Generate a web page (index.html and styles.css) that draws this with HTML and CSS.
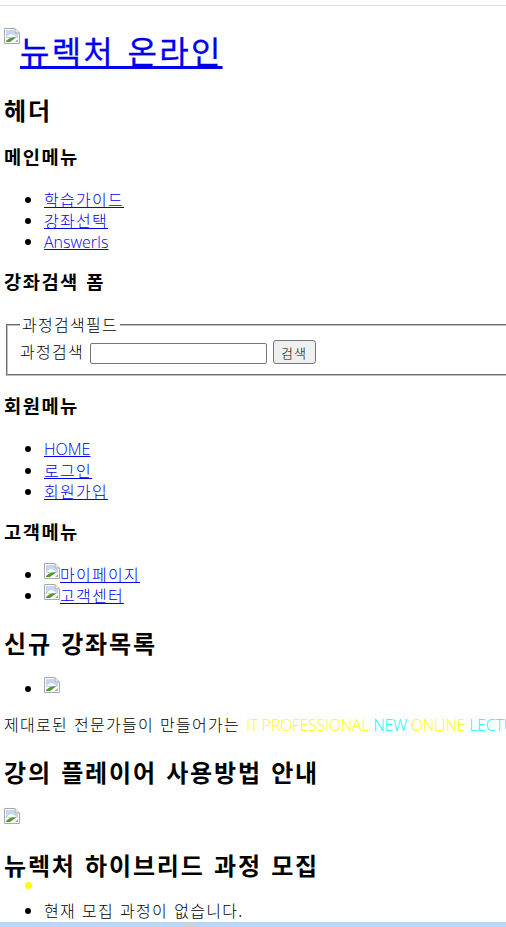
FILE: index.html
```html
<!DOCTYPE html>
<html lang="ko">
<head>
<meta charset="utf-8">
<title>뉴렉처 온라인</title>
<link rel="stylesheet" href="styles.css">
</head>
<body>
<svg width="0" height="0" class="defs" aria-hidden="true">
  <symbol id="broken" viewBox="0 0 16 16">
    <path d="M.5.5H11L15.500 5V15.500H.5Z" fill="#fff" stroke="#a8a8a8"/>
    <path d="M2 2H10.500V5.500H14V10H2Z" fill="#c3d6f2"/>
    <path d="M3 9C5 5.500 9 5 12 9Z" fill="#fff"/>
    <path d="M2 14V13C5 10 9 8.500 12 9.500L6 14Z" fill="#4f9a2a"/>
    <path d="M11 14L14 11V14Z" fill="#a8a8a8"/>
    <path d="M11 .5V5H15.500" fill="#e8e8e8" stroke="#a8a8a8"/>
  </symbol>
</svg>
<div class="rule"></div>
<h1 class="logo"><a href="#"><svg class="bimg"><use href="#broken"/></svg>뉴렉처 온라인</a></h1>
<h2 class="h-lg h-first">헤더</h2>
<h3 class="h-md">메인메뉴</h3>
<ul class="list">
  <li><a href="#">학습가이드</a></li>
  <li><a href="#">강좌선택</a></li>
  <li><a href="#"><span class="lat">AnswerIs</span></a></li>
</ul>
<h3 class="h-md">강좌검색 폼</h3>
<form class="search">
  <fieldset class="field">
    <legend class="legend">과정검색필드</legend>
    <label class="label" for="q">과정검색</label>
    <input class="input" id="q" type="text">
    <button class="btn" type="button">검색</button>
  </fieldset>
</form>
<h3 class="h-md">회원메뉴</h3>
<ul class="list">
  <li><a href="#"><span class="lat">HOME</span></a></li>
  <li><a href="#">로그인</a></li>
  <li><a href="#">회원가입</a></li>
</ul>
<h3 class="h-md h-md-gap">고객메뉴</h3>
<ul class="list">
  <li><a href="#"><svg class="bimg"><use href="#broken"/></svg>마이페이지</a></li>
  <li><a href="#"><svg class="bimg"><use href="#broken"/></svg>고객센터</a></li>
</ul>
<h2 class="h-lg">신규 강좌목록</h2>
<ul class="list list-icon">
  <li><svg class="bimg"><use href="#broken"/></svg></li>
</ul>
<div class="slogan-clip"><p class="slogan">제대로된 전문가들이 만들어가는 <span class="lat tag"><span class="y">IT PROFESSIONAL</span> <span class="c">NEW</span> <span class="y">ONLINE</span> <span class="c">LECTU</span></span></p></div>
<h2 class="h-lg h-lg-mid">강의 플레이어 사용방법 안내</h2>
<p class="pic"><svg class="bimg"><use href="#broken"/></svg></p>
<h2 class="h-lg h-lg-low">뉴렉처 하이브리드 과정 모집</h2>
<ul class="list list-last">
  <li>현재 모집 과정이 없습니다.</li>
</ul>
<div class="dot"></div>
<div class="bar"><span class="thumb"></span></div>
</body>
</html>
```
FILE: styles.css
```css
html, body { margin: 0; padding: 0; height: 927px; overflow: hidden; }
body {
  position: relative;
  padding: 0 4px;
  box-sizing: border-box;
  background: #fff;
  color: #000;
  font: 300 16px/21px "Noto Sans CJK KR", "Noto Sans", sans-serif;
  letter-spacing: 1.28px;
  word-spacing: .3px;
}
.defs { position: absolute; }
a { color: #00e; }
.lat { font-family: "Open Sans", sans-serif; font-weight: 300; letter-spacing: 0; word-spacing: 0; }
.rule { height: 1px; margin: 0 -4px; background: #e0e0e0; position: relative; top: 5px; }
.logo { margin: 26px 0 0; font-size: 32px; line-height: 46px; font-weight: 400; letter-spacing: .07em; word-spacing: .04em; -webkit-text-stroke: .3px; }
.h-lg { margin: 21px 0 0; font-size: 24px; line-height: 32px; font-weight: 700; letter-spacing: .075em; word-spacing: .04em; }
.h-first { margin-bottom: 17px; }
.h-lg-mid { margin-top: 20px; }
.h-lg-low { margin-top: 19px; }
.h-md { margin: 15px 0 0; font-size: 18.72px; line-height: 26px; font-weight: 700; letter-spacing: .08em; word-spacing: .04em; }
.h-md-gap { margin-top: 16px; }
.list { margin: 20px 0 0; padding: 0 0 0 40px; }
.list-icon { margin-top: 19px; }
.list-last { margin-top: 19px; }
.bimg { width: 16px; height: 16px; vertical-align: baseline; margin: -8px 0 2px; }
.logo .bimg { margin: -20px 0 20px; }
.search { width: 600px; margin: 20px 0 16px; }
.field { margin: 0 2px; padding: 5px 12px 10px; border: 2px groove #c0c0c0; word-spacing: 0; }
.legend { padding: 0 2px; line-height: 21px; }
.input { width: 171px; height: 15px; padding: 2px; border: 1px solid #767676; border-radius: 2px; margin: 0; }
.btn { width: 43px; height: 24px; padding: 0; border: 1px solid #767676; border-radius: 3px; background: #efefef; color: #000; font: 300 13px "Noto Sans CJK KR", sans-serif; letter-spacing: .08em; }
.slogan-clip { overflow: hidden; margin: 0 -4px 0 0; }
.slogan { margin: 15px 0 0; white-space: nowrap; font-size: 16px; }
.tag { letter-spacing: -.3px; }
.y { color: #ff0; }
.c { color: #0ff; }
.pic { margin: 21px 0 0; }
.dot { position: absolute; left: 25px; top: 882px; width: 7px; height: 7px; border-radius: 50%; background: #ff0; }
.bar { position: absolute; left: 0; right: 0; top: 922px; height: 5px; background: #b7d8fb; }
.thumb { position: absolute; left: 184px; top: 0; width: 12px; height: 5px; background: #c9d3dd; }
```
